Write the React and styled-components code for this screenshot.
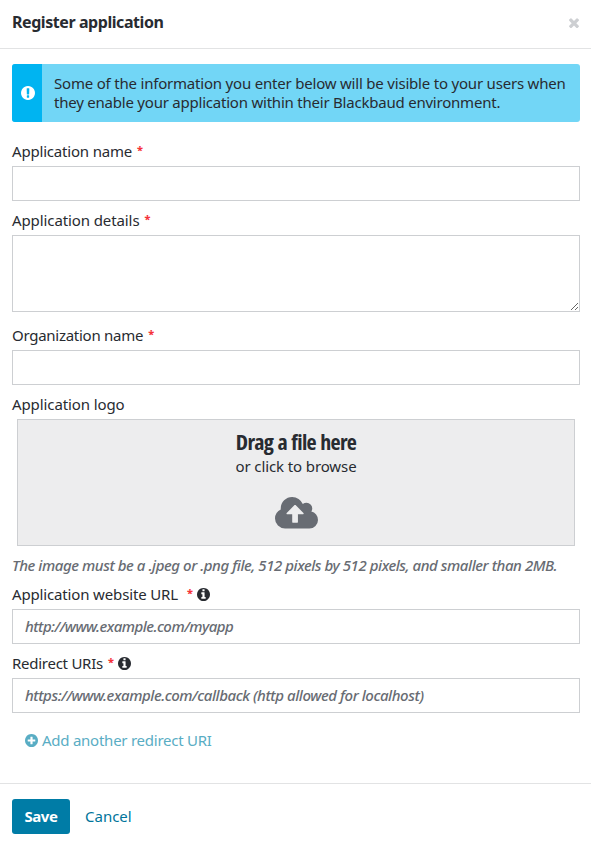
import React from "react";
import styled, { createGlobalStyle } from "styled-components";

const GlobalStyle = createGlobalStyle`
  *, *::before, *::after { box-sizing: border-box; }
  body {
    margin: 0;
    background: #fff;
    color: #282b31;
    font: 15px/20px "Noto Sans", "Open Sans", sans-serif;
  }
`;

const Modal = styled.form`
  display: flex;
  flex-direction: column;
  height: 844px;
  overflow: hidden;
`;

const Header = styled.header`
  display: flex;
  align-items: center;
  justify-content: space-between;
  height: 49px;
  padding: 0 12px 4px 12px;
  border-bottom: 1px solid #e2e3e4;
`;

const Title = styled.h1`
  margin: 0;
  font-size: 16px;
  font-weight: 700;
  line-height: 22px;
  letter-spacing: ${(p) => p.$track}px;
`;

const CloseButton = styled.button`
  display: flex;
  padding: 1px 0 0;
  border: 0;
  background: none;
  color: #cdcfd2;
`;

const Content = styled.main`
  flex: 1;
  padding: 15px 11px 0 12px;
`;

const Alert = styled.div`
  display: flex;
  height: 58px;
  border-radius: 3px;
  overflow: hidden;
  background: #72d6f6;
`;

const AlertIcon = styled.div`
  display: flex;
  align-items: center;
  justify-content: center;
  width: 30px;
  padding: 0 0 0 1px;
  background: #00b4f1;
  color: #fff;
`;

const AlertText = styled.p`
  margin: 0;
  padding: 10px 0 0 12px;
  line-height: 19px;
  white-space: nowrap;
`;

const Tracked = styled.span`
  letter-spacing: ${(p) => p.$track}px;
`;

const Field = styled.div`
  padding-top: ${(p) => p.$top ?? 9}px;
`;

const Label = styled.label`
  display: flex;
  align-items: center;
  height: 20px;
  margin-bottom: 5px;
  white-space: pre;
`;

const Required = styled.span`
  margin-left: ${(p) => p.$gap ?? 5}px;
  padding-bottom: 2px;
  color: #f5333a;
  font-weight: 800;
  font-size: 11px;
  line-height: 18px;
`;

const InfoIcon = styled.span`
  display: flex;
  margin-left: 4px;
`;

const Input = styled.input`
  display: block;
  width: 100%;
  height: 35px;
  padding: 0 12px 2px;
  border: 1px solid #cdcfd2;
  border-radius: 0;
  background: #fff;
  font: inherit;
  letter-spacing: ${(p) => p.$track ?? 0}px;
  &::placeholder {
    color: #686c73;
    font-style: italic;
    font-weight: 500;
    opacity: 1;
  }
`;

const TextArea = styled.textarea`
  display: block;
  width: 100%;
  height: 77px;
  border: 1px solid #cdcfd2;
  border-radius: 0;
  background: #fff;
  font: inherit;
`;

const DropZone = styled.div`
  display: flex;
  flex-direction: column;
  align-items: center;
  height: 127px;
  margin: 0 5px;
  padding-top: 6px;
  border: 1px solid #cdcfd2;
  background: #ededee;
`;

const DropTitle = styled.div`
  font-family: "Open Sans", "Noto Sans", sans-serif;
  font-size: 22px;
  font-weight: 700;
  font-stretch: 75%;
  line-height: 30px;
  letter-spacing: -0.68px;
  word-spacing: 1px;
`;

const DropIcon = styled.div`
  display: flex;
  margin-top: 21px;
  color: #686c73;
`;

const Hint = styled.p`
  margin: 0;
  padding-top: 9px;
  height: 29px;
  color: #686c73;
  font-style: italic;
  font-weight: 500;
  letter-spacing: -0.44px;
  white-space: nowrap;
`;

const AddButton = styled.button`
  display: flex;
  align-items: center;
  gap: 4px;
  margin: 17px 0 0 13px;
  padding: 0;
  border: 0;
  background: none;
  color: #59adc4;
  font: inherit;
  letter-spacing: -0.25px;
`;

const Footer = styled.footer`
  display: flex;
  height: 61px;
  padding: 15px 12px 0;
  border-top: 1px solid #e2e3e4;
`;

const SaveButton = styled.button`
  width: 58px;
  height: 35px;
  padding: 0 0 2px;
  border: 0;
  border-radius: 3px;
  background: #007ca6;
  color: #fff;
  font: inherit;
  font-weight: 700;
  letter-spacing: -0.5px;
`;

const CancelButton = styled.button`
  height: 35px;
  margin-left: 15px;
  padding: 0 0 2px;
  border: 0;
  background: none;
  color: #00759b;
  font: inherit;
  letter-spacing: 0;
`;

const DISC =
  "M1536 640q0 -209 -103 -385.5t-279.5 -279.5t-385.5 -103t-385.5 103t-279.5 279.5t-103 385.5t103 385.5t279.5 279.5t385.5 103t385.5 -103t279.5 -279.5t103 -385.5z";

const ICONS = {
  close: {
    box: [110, 1190, 1188, 1188],
    d: "M1298 214q0 -40 -28 -68l-136 -136q-28 -28 -68 -28t-68 28l-294 294l-294 -294q-28 -28 -68 -28t-68 28l-136 136q-28 28 -28 68t28 68l294 294l-294 294q-28 28 -28 68t28 68l136 136q28 28 68 28t68 -28l294 -294l294 294q28 28 68 28t68 -28l136 -136q28 -28 28 -68t-28 -68l-294 -294l294 -294q28 -28 28 -68z",
  },
  alert: {
    box: [0, 1408, 1536, 1536],
    d: "M768 1408q209 0 385.5 -103t279.5 -279.5t103 -385.5t-103 -385.5t-279.5 -279.5t-385.5 -103t-385.5 103t-279.5 279.5t-103 385.5t103 385.5t279.5 279.5t385.5 103zM896 161v190q0 14 -9 23.5t-22 9.5h-192q-13 0 -23 -10t-10 -23v-190q0 -13 10 -23t23 -10h192q13 0 22 9.5t9 23.5zM894 505l18 621q0 12 -10 18q-10 8 -24 8h-220q-14 0 -24 -8q-10 -6 -10 -18l17 -621q0 -10 10 -17.5t24 -7.5h185q14 0 23.5 7.5t10.5 17.5z",
  },
  info: {
    box: [0, 1408, 1536, 1536],
    d: "M1024 160v160q0 14 -9 23t-23 9h-96v512q0 14 -9 23t-23 9h-320q-14 0 -23 -9t-9 -23v-160q0 -14 9 -23t23 -9h96v-320h-96q-14 0 -23 -9t-9 -23v-160q0 -14 9 -23t23 -9h448q14 0 23 9t9 23zM896 1056v160q0 14 -9 23t-23 9h-192q-14 0 -23 -9t-9 -23v-160q0 -14 9 -23t23 -9h192q14 0 23 9t9 23z" + DISC,
  },
  plus: {
    box: [0, 1408, 1536, 1536],
    d: "M1216 576v128q0 26 -19 45t-45 19h-256v256q0 26 -19 45t-45 19h-128q-26 0 -45 -19t-19 -45v-256h-256q-26 0 -45 -19t-19 -45v-128q0 -26 19 -45t45 -19h256v-256q0 -26 19 -45t45 -19h128q26 0 45 19t19 45v256h256q26 0 45 19t19 45z" + DISC,
  },
  cloud: {
    box: [0, 1408, 1920, 1408],
    d: "M1280 672q0 14 -9 23l-352 352q-9 9 -23 9t-23 -9l-351 -351q-10 -12 -10 -24q0 -14 9 -23t23 -9h224v-352q0 -13 9.5 -22.5t22.5 -9.5h192q13 0 22.5 9.5t9.5 22.5v352h224q13 0 22.5 9.5t9.5 22.5zM1920 384q0 -159 -112.5 -271.5t-271.5 -112.5h-1088q-185 0 -316.5 131.5t-131.5 316.5q0 130 70 240t188 165q-2 30 -2 43q0 212 150 362t362 150q156 0 285.5 -87t188.5 -231q71 62 166 62q106 0 181 -75t75 -181q0 -76 -41 -138q130 -31 213.5 -135.5t83.5 -238.5z",
  },
};

function Icon({ name, width }) {
  const {
    box: [x, top, w, h],
    d,
  } = ICONS[name];
  return (
    <svg width={width} height={(width * h) / w} viewBox={`${x} ${-top} ${w} ${h}`} fill="currentColor" aria-hidden="true">
      <path transform="scale(1 -1)" fillRule="evenodd" d={d} />
    </svg>
  );
}

export default function App() {
  return (
    <>
      <GlobalStyle />
      <Modal>
        <Header>
          <Title $track={-0.43}>Register application</Title>
          <CloseButton type="button" aria-label="Close">
            <Icon name="close" width={10} />
          </CloseButton>
        </Header>
        <Content>
          <Alert>
            <AlertIcon>
              <Icon name="alert" width={14} />
            </AlertIcon>
            <AlertText>
              <Tracked $track={-0.2}>Some of the information you enter below will be visible to your users when</Tracked>
              <br />
              <Tracked $track={-0.22}>they enable your application within their Blackbaud environment.</Tracked>
            </AlertText>
          </Alert>
          <Field $top={19}>
            <Label htmlFor="name">
              <Tracked $track={-0.19}>Application name</Tracked>
              <Required>*</Required>
            </Label>
            <Input id="name" />
          </Field>
          <Field>
            <Label htmlFor="details">
              <Tracked $track={-0.1}>Application details</Tracked>
              <Required>*</Required>
            </Label>
            <TextArea id="details" />
          </Field>
          <Field $top={13}>
            <Label htmlFor="organization">
              <Tracked $track={-0.27}>Organization name</Tracked>
              <Required>*</Required>
            </Label>
            <Input id="organization" />
          </Field>
          <Field>
            <Label>
              <Tracked $track={-0.1}>Application logo</Tracked>
            </Label>
            <DropZone>
              <DropTitle>Drag a file here</DropTitle>
              <Tracked $track={-0.11}>or click to browse</Tracked>
              <DropIcon>
                <Icon name="cloud" width={43} />
              </DropIcon>
            </DropZone>
            <Hint>The image must be a .jpeg or .png file, 512 pixels by 512 pixels, and smaller than 2MB.</Hint>
          </Field>
          <Field>
            <Label htmlFor="website">
              <Tracked $track={-0.15}>Application website URL</Tracked>
              <Required $gap={9}>*</Required>
              <InfoIcon>
                <Icon name="info" width={13} />
              </InfoIcon>
            </Label>
            <Input id="website" placeholder="http://www.example.com/myapp" $track={-0.52} />
          </Field>
          <Field>
            <Label htmlFor="redirect">
              <Tracked $track={-0.26}>Redirect URIs</Tracked>
              <Required>*</Required>
              <InfoIcon>
                <Icon name="info" width={13} />
              </InfoIcon>
            </Label>
            <Input id="redirect" placeholder="https://www.example.com/callback (http allowed for localhost)" $track={-0.44} />
          </Field>
          <AddButton type="button">
            <Icon name="plus" width={13} />
            Add another redirect URI
          </AddButton>
        </Content>
        <Footer>
          <SaveButton type="button">Save</SaveButton>
          <CancelButton type="button">Cancel</CancelButton>
        </Footer>
      </Modal>
    </>
  );
}
